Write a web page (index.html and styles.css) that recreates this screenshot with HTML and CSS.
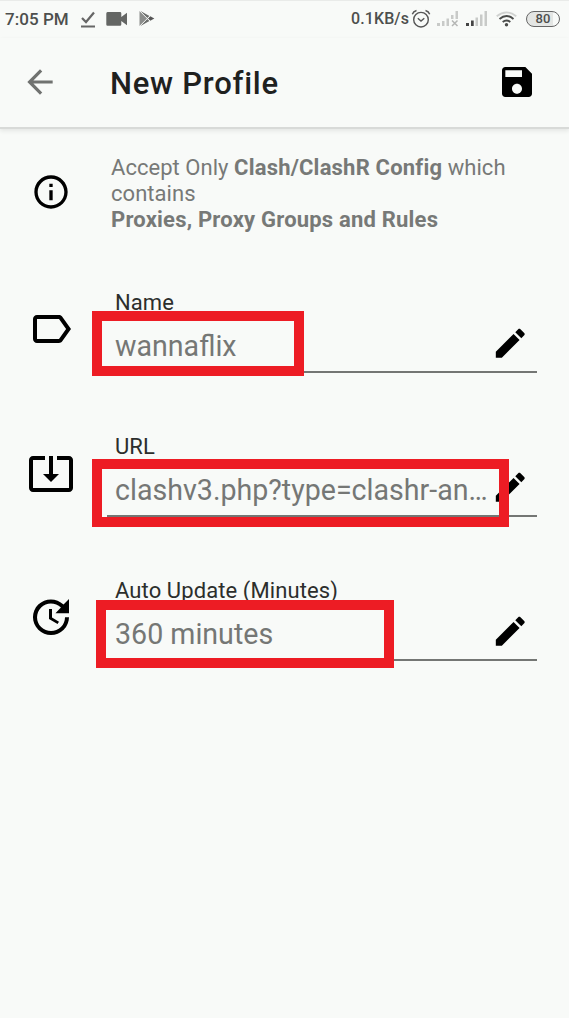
FILE: index.html
```html
<!DOCTYPE html>
<html lang="en">
<head>
<meta charset="utf-8">
<title>New Profile</title>
<link rel="stylesheet" href="styles.css">
</head>
<body>
<div class="screen">
  <div class="status">
    <span class="clock">7:05 PM</span>
    <svg class="st-check" width="16" height="18" viewBox="0 0 16 18"><path d="M2 8l4 4 8-9.500" fill="none" stroke="#666" stroke-width="2.200"/><path d="M1 16.500h14" stroke="#666" stroke-width="2"/></svg>
    <svg class="st-video" width="22" height="14" viewBox="0 0 22 14"><path d="M1.500 0H14q1.300 0 1.300 1.300V5L21 .8v12.400L15.300 9v3.500q0 1.300-1.300 1.300H1.500Q.3 13.800.3 12.500v-11Q.3 0 1.500 0z" fill="#646664"/></svg>
    <svg class="st-play" width="16" height="17" viewBox="0 0 16 17"><path d="M.5 1v15l7.500-7.500z" fill="#8b8d8b"/><path d="M1 .8l9.500 5.200L8 8.300zM1 16.200l9.500-5.200L8 8.700z" fill="#6d6f6d"/><path d="M11.300 6.200l4 2.300-4 2.300L9 8.500z" fill="#555"/><path d="M1 1l10.500 10.500M1 16L11.500 5.500" stroke="#f4f6f4" stroke-width=".8"/></svg>
    <span class="spacer"></span>
    <span class="speed">0.1KB/s</span>
    <svg class="st-alarm" width="20" height="20" viewBox="0 0 20 20" fill="none" stroke="#555" stroke-width="1.400"><circle cx="10" cy="10.700" r="7.300"/><path d="M6.800 9.300l3.200 2.700 3.300-2.700M1.300 5.200Q2.300 2.300 5.500 1.500M18.700 5.200Q17.700 2.300 14.500 1.500"/></svg>
    <svg class="st-sig1" width="22" height="17" viewBox="0 0 22 17" fill="#c8cac8"><path d="M0 13h3v3H0zM5 11h2.500v5H5zM9.500 8.500H12V16H9.500zM14 5h2.500v4H14zM18.500 1H21v8h-2.500z"/><path d="M15 10.500l5.500 5.500m0-5.500L15 16" stroke="#b4b6b4" stroke-width="1.500"/></svg>
    <svg class="st-sig2" width="22" height="17" viewBox="0 0 22 17"><path d="M0 13h3v3H0zM5 10.500h2.700V16H5z" fill="#444"/><path d="M9.500 7.500H12V16H9.500zM14 4.500h2.500V16H14zM18.500 1H21v15h-2.500z" fill="#c8cac8"/></svg>
    <svg class="st-wifi" width="21" height="16" viewBox="0 0 21 16" fill="none"><path d="M.7 5.200Q10.500-2.500 20.300 5.200" stroke="#d0d2d0" stroke-width="1.800"/><path d="M3.500 7.900Q10.500 2 17.500 7.900M6.700 11Q10.500 7.800 14.300 11" stroke="#4a4c4a" stroke-width="1.900"/><circle cx="10.500" cy="13.700" r="1.700" fill="#4a4c4a"/></svg>
    <span class="battery">80</span>
  </div>
  <header class="bar">
    <svg class="back" width="38" height="38" viewBox="0 0 24 24"><path fill="#707270" d="M20 11H7.830l5.590-5.590L12 4l-8 8 8 8 1.410-1.410L7.830 13H20v-2z"/></svg>
    <h1 class="title">New Profile</h1>
    <svg class="save" width="40" height="40" viewBox="0 0 24 24"><path d="M17 3H5c-1.110 0-2 .9-2 2v14c0 1.100.89 2 2 2h14c1.100 0 2-.9 2-2V7l-4-4zm-5 16c-1.660 0-3-1.340-3-3s1.340-3 3-3 3 1.340 3 3-1.340 3-3 3zm3-10H5V5h10v4z"/></svg>
  </header>
  <main class="content">
    <section class="notice">
      <svg class="lead info" width="40" height="40" viewBox="0 0 24 24"><path d="M11 7h2v2h-2zm0 4h2v6h-2zm1-9C6.480 2 2 6.480 2 12s4.480 10 10 10 10-4.480 10-10S17.520 2 12 2zm0 18c-4.410 0-8-3.590-8-8s3.590-8 8-8 8 3.590 8 8-3.590 8-8 8z"/></svg>
      <p class="notice-text">Accept Only <b>Clash/ClashR Config</b> which<br>contains<br><b>Proxies, Proxy Groups and Rules</b></p>
    </section>
    <section class="field">
      <svg class="lead" width="48" height="48" viewBox="0 0 24 24"><path d="M17.630 5.840C17.270 5.330 16.670 5 16 5L5 5.010C3.900 5.010 3 5.900 3 7v10c0 1.100.9 1.990 2 1.990L16 19c.67 0 1.270-.33 1.630-.84L22 12l-4.370-6.160zM16 17H5V7h11l3.550 5L16 17z"/></svg>
      <div class="body">
        <label class="label">Name</label>
        <div class="input"><span class="value">wannaflix</span><svg class="pencil" width="38.500" height="38.500" viewBox="0 0 24 24"><path d="M3 17.250V21h3.750L17.810 9.940l-3.750-3.750L3 17.250zM20.710 7.040c.39-.39.39-1.020 0-1.410l-2.340-2.340c-.39-.39-1.020-.39-1.410 0l-1.830 1.830 3.750 3.750 1.830-1.830z"/></svg></div>
      </div>
      <div class="mark mark-name"></div>
    </section>
    <section class="field">
      <svg class="lead" width="48" height="48" viewBox="0 0 24 24"><path d="M12 16.500l4-4h-3v-9h-2v9H8l4 4zm9-13h-6v1.990h6v14.030H3V5.490h6V3.500H3c-1.100 0-2 .9-2 2v14c0 1.100.9 2 2 2h18c1.100 0 2-.9 2-2v-14c0-1.100-.9-2-2-2z"/></svg>
      <div class="body">
        <label class="label">URL</label>
        <div class="input"><span class="value">clashv3.php?type=clashr-an…</span><svg class="pencil" width="38.500" height="38.500" viewBox="0 0 24 24"><path d="M3 17.250V21h3.750L17.810 9.940l-3.750-3.750L3 17.250zM20.710 7.040c.39-.39.39-1.020 0-1.410l-2.340-2.340c-.39-.39-1.020-.39-1.410 0l-1.830 1.830 3.750 3.750 1.830-1.830z"/></svg></div>
      </div>
      <div class="mark mark-url"></div>
    </section>
    <section class="field">
      <svg class="lead" width="48" height="48" viewBox="0 0 24 24"><path d="M21 10.120h-6.780l2.740-2.820c-2.730-2.700-7.150-2.800-9.880-.1-2.730 2.710-2.730 7.080 0 9.790s7.150 2.710 9.880 0C18.320 15.650 19 14.080 19 12.100h2c0 1.980-.88 4.550-2.640 6.290-3.510 3.480-9.210 3.480-12.720 0-3.500-3.470-3.530-9.110-.02-12.580s9.140-3.470 12.650 0L21 3v7.120zM12.500 8v4.250l3.500 2.080-.72 1.210L11 13V8h1.500z"/></svg>
      <div class="body">
        <label class="label">Auto Update (Minutes)</label>
        <div class="input"><span class="value">360 minutes</span><svg class="pencil" width="38.500" height="38.500" viewBox="0 0 24 24"><path d="M3 17.250V21h3.750L17.810 9.940l-3.750-3.750L3 17.250zM20.710 7.040c.39-.39.39-1.020 0-1.410l-2.340-2.340c-.39-.39-1.020-.39-1.410 0l-1.830 1.830 3.750 3.750 1.830-1.830z"/></svg></div>
      </div>
      <div class="mark mark-auto"></div>
    </section>
  </main>
</div>
</body>
</html>
```
FILE: styles.css
```css
* { box-sizing: border-box; }
body { margin: 0; background: #f8faf8; font-family: Roboto, "Liberation Sans", sans-serif; }
svg { display: block; flex: none; }
.screen { width: 569px; height: 1018px; overflow: hidden; background: #f8faf8; border-top: 1px solid #e9ebe9; }
.status { display: flex; align-items: center; height: 37px; padding: 0 9px 2px 5px; color: #4d4f4d; white-space: nowrap; }
.clock { font-size: 17px; font-weight: 500; letter-spacing: 0.05px; width: 75px; }
.st-video { margin-left: 10px; }
.st-play { margin-left: 11px; }
.spacer { flex: 1; }
.speed { font-size: 16px; font-weight: 500; letter-spacing: 0.1px; width: 61px; }
.st-sig1 { margin-left: 6px; }
.st-sig2 { margin-left: 7px; }
.st-wifi { margin-left: 8px; }
.battery { width: 34px; height: 16px; margin-left: 9px; border: 1.5px solid #666; border-radius: 8px; font-size: 13px; font-weight: 500; line-height: 14px; text-align: center; background: linear-gradient(90deg, #e4e6e4 80%, #f8faf8 80%); }
.speed + .st-alarm { margin-left: -1px; }
.bar { display: flex; align-items: center; height: 91px; padding: 0 32px 1px 21px; border-bottom: 2px solid #d8dad8; box-shadow: 0 2px 4px #e4e6e4; }
.title { flex: 1; margin: 4px 0 0 51px; color: #1f211f; font-size: 31px; font-weight: 500; line-height: 38px; letter-spacing: 0.75px; white-space: nowrap; }
.content { display: flex; flex-direction: column; }
.notice { display: grid; grid-template-columns: 80px 1fr; height: 130px; padding: 26px 0 0 31px; }
.info { margin-top: 17px; }
.notice-text { margin: 0; color: #777977; font-size: 22px; line-height: 26px; letter-spacing: 0.04px; white-space: nowrap; }
.notice-text b { font-weight: 700; letter-spacing: 0.2px; }
.field { position: relative; display: grid; grid-template-columns: 80px 430px; height: 144px; padding: 31px 0 0 27px; }
.field .lead { margin-top: 15px; }
.label { display: block; height: 26px; padding-left: 8px; color: #2c2e2c; font-size: 22px; line-height: 26px; letter-spacing: 0.1px; white-space: nowrap; }
.input { display: flex; align-items: center; justify-content: space-between; height: 57px; padding: 0 8px 0 8px; border-bottom: 2px solid #747674; }
.value { padding-top: 4px; color: #757775; font-size: 28.6px; line-height: 34px; white-space: nowrap; }
.mark { position: absolute; border: 10px solid #ed1c24; }
.mark-name { left: 92px; top: 52px; width: 212px; height: 65px; }
.mark-url { left: 92px; top: 56px; width: 417px; height: 68px; }
.mark-auto { left: 96px; top: 53px; width: 298px; height: 68px; }
```
